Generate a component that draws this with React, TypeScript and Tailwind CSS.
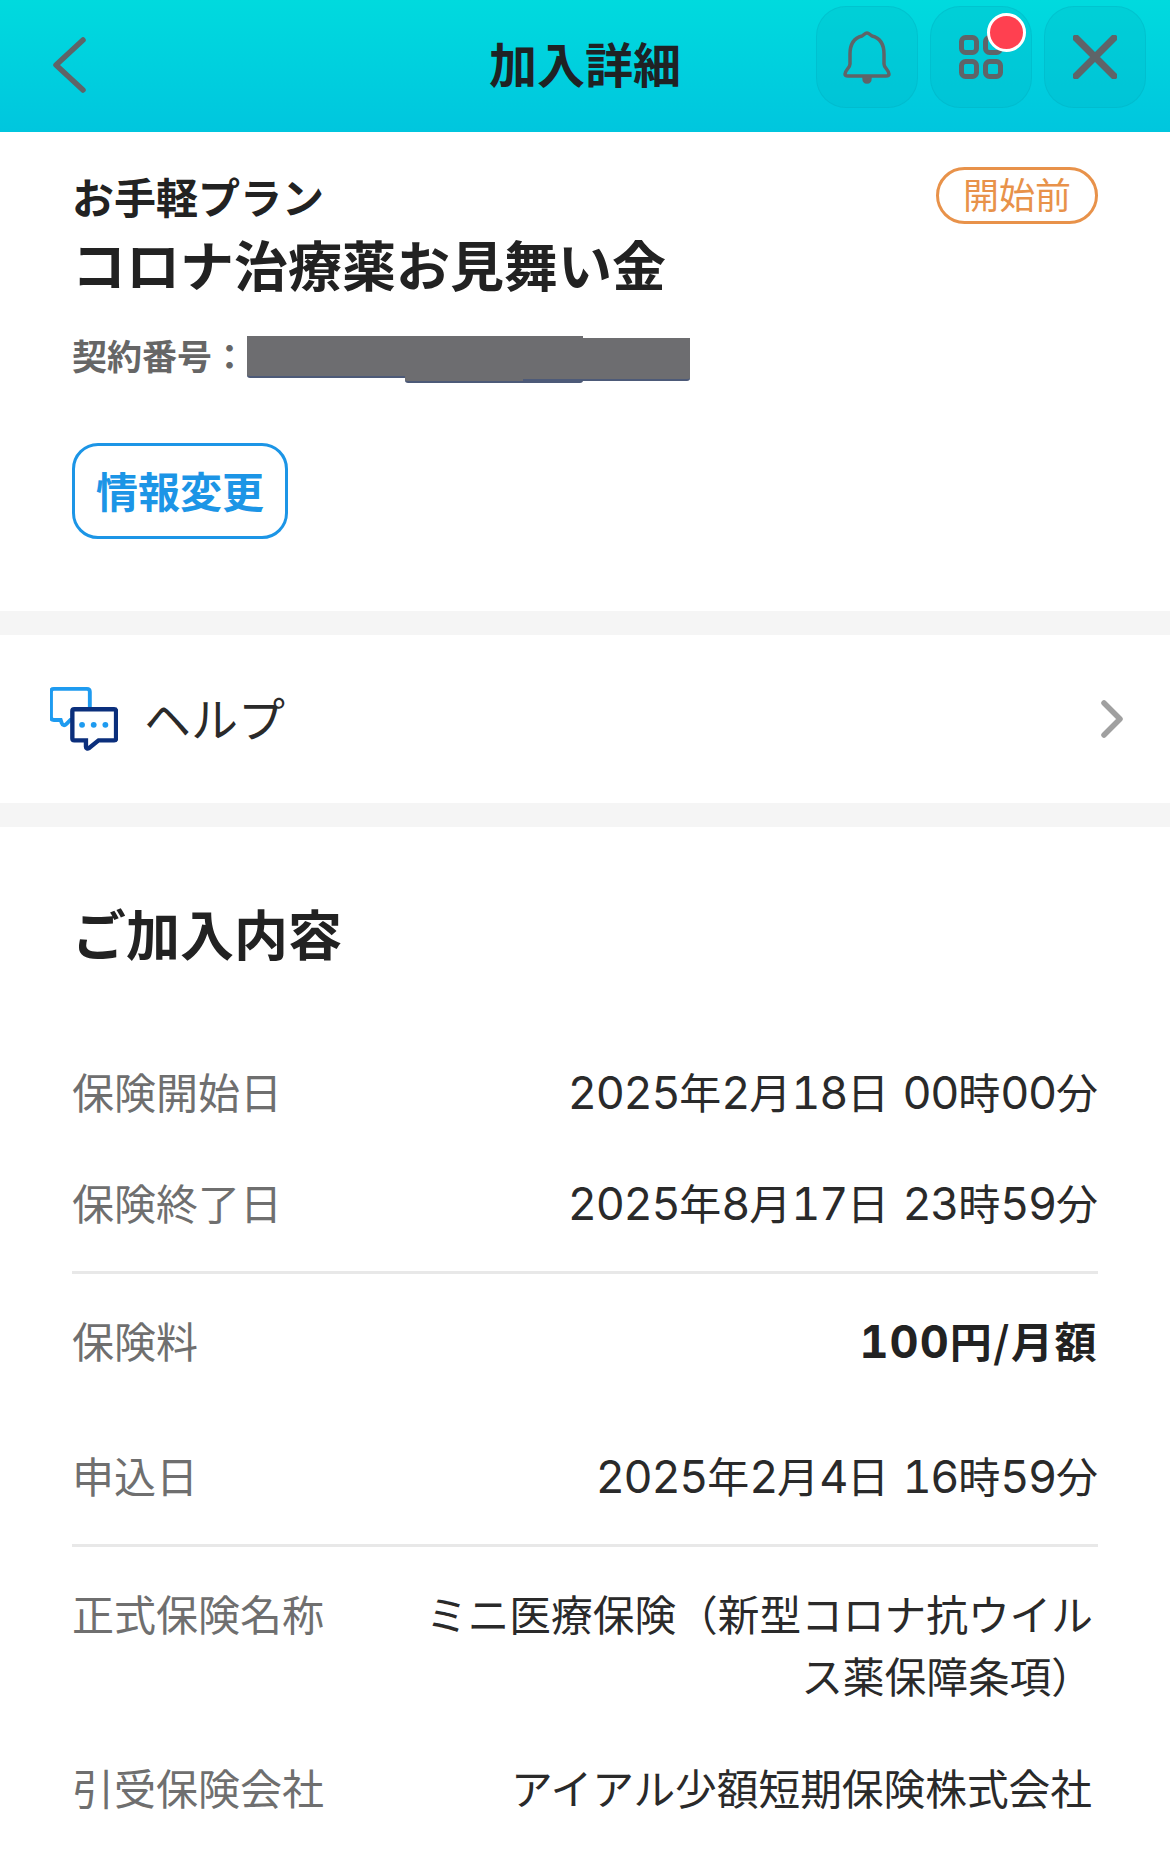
import React from 'react';

const font = { fontFamily: '"Noto Sans CJK JP", "Noto Sans", sans-serif' };
const digitFont = { fontFamily: 'Inter, sans-serif' };

// digits are wider than the CJK font's own, so they get their own face
const withDigits = (text: string, spacing: string) =>
  text.split(/(\d+)/).map((part, i) =>
    /\d/.test(part) ? (
      <span key={i} style={digitFont} className={`text-[45px] leading-none tabular-nums ${spacing}`}>
        {part}
      </span>
    ) : (
      part
    ),
  );

const dateSpacing = 'tracking-[-1.3px]';

const Row = ({ label, value, strong, className }: { label: string; value: React.ReactNode; strong?: boolean; className: string }) => (
  <div className={`flex justify-between ${className}`}>
    <span className="shrink-0 text-[42px] leading-[62px] text-[#6f6f6f]">{label}</span>
    <span className={`text-right text-[42px] leading-[62px] [word-spacing:4px] ${strong ? 'font-bold text-[#222222]' : 'text-[#2a2a2a]'}`}>{value}</span>
  </div>
);

const HeaderButton = ({ children }: { children: React.ReactNode }) => (
  <div className="relative flex h-[102px] w-[102px] items-center justify-center rounded-[30px] border border-[#00a8ba]/30 bg-[#00b4c4]/25">
    {children}
  </div>
);

const RedactBar = ({ className }: { className: string }) => (
  <div className={`border-b-[2px] border-[#4d5a78] bg-[#6d6d70] ${className}`} />
);

export default function App() {
  return (
    <div style={font} className="h-[1871px] w-[1170px] overflow-hidden bg-white">
      <header className="relative flex h-[132px] items-center justify-center bg-gradient-to-b from-[#00dade] to-[#00c6de]">
        <svg className="absolute left-[50px] top-[36px]" width="40" height="58" viewBox="0 0 40 58" fill="none" stroke="#5f6468" strokeWidth="5.5" strokeLinecap="round" strokeLinejoin="round">
          <path d="M33 4 6 29l27 25" />
        </svg>
        <h1 className="-mt-[8px] text-[48px] font-bold text-[#1f2224]">加入詳細</h1>
        <div className="absolute right-[24px] top-[6px] flex gap-[12px]">
          <HeaderButton>
            <svg width="48" height="54" viewBox="0 0 48 54" fill="none" stroke="#5f6468" strokeWidth="3.5" strokeLinejoin="round">
              <path d="M24 3c-2 0-3 2-5 3C11 8 7 14 7 24v10c0 4-5 6-5 10 0 1 1 2 3 2h38c2 0 3-1 3-2 0-4-5-6-5-10V24c0-10-4-16-12-18-2-1-3-3-5-3Z" />
              <path d="M21 48h6c0 3-1 4-3 4s-3-1-3-4Z" fill="#5f6468" />
            </svg>
          </HeaderButton>
          <HeaderButton>
            <svg width="44" height="44" viewBox="0 0 44 44" fill="none" stroke="#5f6468" strokeWidth="5">
              <rect x="2.5" y="2.5" width="15" height="15" rx="4" />
              <rect x="26.5" y="2.5" width="15" height="15" rx="4" />
              <rect x="2.5" y="26.5" width="15" height="15" rx="4" />
              <rect x="26.5" y="26.5" width="15" height="15" rx="4" />
            </svg>
            <span className="absolute left-[56px] top-[6px] h-[39px] w-[39px] rounded-full border-[3px] border-white bg-[#ff4050]" />
          </HeaderButton>
          <HeaderButton>
            <svg width="44" height="44" viewBox="0 0 44 44" fill="none" stroke="#5f6468" strokeWidth="7" strokeLinecap="round">
              <path d="M3 3l38 38M41 3 3 41" />
            </svg>
          </HeaderButton>
        </div>
      </header>

      <section className="h-[479px] px-[72px] pt-[35px]">
        <div className="flex items-start justify-between">
          <div className="mt-[4px] text-[42px] font-bold leading-[50px] text-[#222222]">お手軽プラン</div>
          <div className="flex h-[57px] w-[162px] items-center justify-center rounded-full border-[3px] border-[#e8924a] pb-[5px] text-[36px] text-[#e8924a]">開始前</div>
        </div>
        <h2 className="mt-[2px] text-[54px] font-bold leading-[76px] text-[#222222]">コロナ治療薬お見舞い金</h2>
        <div className="mt-[29px] flex h-[48px] items-start">
          <span className="text-[35px] font-bold leading-[48px] text-[#666666]">契約番号：</span>
          <div className="flex items-start pt-[5px]">
            <RedactBar className="h-[42px] w-[158px] rounded-bl-[3px]" />
            <RedactBar className="h-[47px] w-[178px] rounded-b-[3px]" />
            <RedactBar className="-ml-[60px] mt-[2px] h-[43px] w-[167px] rounded-br-[3px]" />
          </div>
        </div>
        <button className="mt-[64px] flex h-[96px] w-[216px] items-center justify-center rounded-[26px] border-[3px] border-[#1c95e6] pb-[4px] text-[42px] font-bold text-[#1c95e6]">情報変更</button>
      </section>

      <div className="h-[24px] bg-[#f5f5f5]" />

      <section className="flex h-[168px] items-center pl-[50px] pr-[46px]">
        <svg width="68" height="66" viewBox="0 0 70 66" fill="none">
          <path d="M4 2h34c2 0 3 1 3 3v26c0 2-1 3-3 3H21l-4 4c-2 2-4 2-5-1l-1-3H4c-2 0-3-1-3-3V5c0-2 1-3 3-3Z" stroke="#1e9bf0" strokeWidth="4" fill="#ffffff" />
          <path d="M25 23h41c1.500 0 2 1 2 2v28c0 1-.5 2-2 2H50l-10 8c-1.500 1-3 0-3-1.500V55H25c-1.500 0-2-1-2-2V25c0-1 .5-2 2-2Z" stroke="#0b2f7c" strokeWidth="4.500" fill="#ffffff" />
          <circle cx="33" cy="39" r="3" fill="#1e9bf0" />
          <circle cx="45" cy="39" r="3" fill="#1e9bf0" />
          <circle cx="57" cy="39" r="3" fill="#1e9bf0" />
        </svg>
        <span className="-mt-[3px] ml-[26px] text-[47px] text-[#2a2a2a]">ヘルプ</span>
        <svg className="ml-auto" width="24" height="38" viewBox="0 0 24 38" fill="none" stroke="#a0a0a0" strokeWidth="5.5" strokeLinecap="round" strokeLinejoin="round">
          <path d="m4 3 16 16L4 35" />
        </svg>
      </section>

      <div className="h-[24px] bg-[#f5f5f5]" />

      <section className="px-[72px]">
        <h2 className="pt-[67px] text-[54px] font-bold leading-[78px] text-[#222222]">ご加入内容</h2>
        <Row className="mt-[88px]" label="保険開始日" value={withDigits('2025年2月18日 00時00分', dateSpacing)} />
        <Row className="mt-[49px] pb-[38px]" label="保険終了日" value={withDigits('2025年8月17日 23時59分', dateSpacing)} />
        <div className="h-[3px] bg-[#e8e8e8]" />
        <Row className="mt-[35px]" label="保険料" value={<span className="tracking-[1.5px]">{withDigits('100円/月額', 'tracking-[1px]')}</span>} strong />
        <Row className="mt-[73px] pb-[38px]" label="申込日" value={withDigits('2025年2月4日 16時59分', dateSpacing)} />
        <div className="h-[3px] bg-[#e8e8e8]" />
        <Row className="mt-[35px]" label="正式保険名称" value={<span className="mr-[5px] block w-[680px] text-[41.7px]">ミニ医療保険（新型コロナ抗ウイルス薬保障条項）</span>} />
        <Row className="mt-[50px]" label="引受保険会社" value={<span className="mr-[6px] block text-[41.7px]">アイアル少額短期保険株式会社</span>} />
      </section>
    </div>
  );
}
